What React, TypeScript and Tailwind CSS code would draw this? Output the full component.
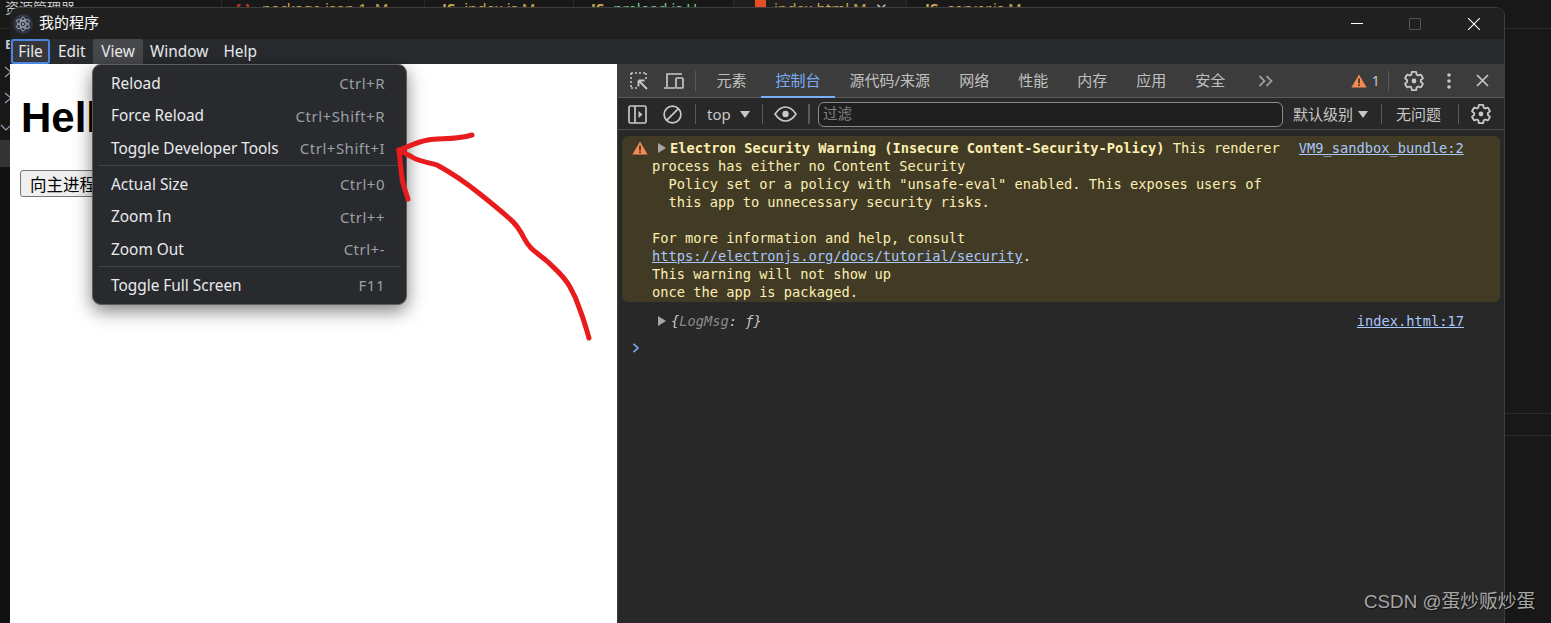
const sansFont = "font-['Noto_Sans','Noto_Sans_CJK_SC',sans-serif]"
const monoFont = "font-['DejaVu_Sans_Mono',monospace]"

const gearPath =
  'M19.43 12.98c.04-.32.07-.64.07-.98s-.03-.66-.07-.98l2.11-1.65c.19-.15.24-.42.12-.64l-2-3.46c-.12-.22-.39-.3-.61-.22l-2.49 1c-.52-.4-1.08-.73-1.69-.98l-.38-2.65C14.46 2.18 14.25 2 14 2h-4c-.25 0-.46.18-.49.42l-.38 2.65c-.61.25-1.17.59-1.69.98l-2.49-1c-.23-.09-.49 0-.61.22l-2 3.46c-.13.22-.07.49.12.64l2.11 1.65c-.04.32-.07.65-.07.98s.03.66.07.98l-2.11 1.65c-.19.15-.24.42-.12.64l2 3.46c.12.22.39.3.61.22l2.49-1c.52.4 1.08.73 1.69.98l.38 2.65c.03.24.24.42.49.42h4c.25 0 .46-.18.49-.42l.38-2.65c.61-.25 1.17-.59 1.69-.98l2.49 1c.23.09.49 0 .61-.22l2-3.46c.12-.22.07-.49-.12-.64l-2.11-1.65z'

function Gear() {
  return (
    <svg width="22" height="22" viewBox="0 0 24 24" fill="none" stroke="#c7c7c7" strokeWidth="2">
      <path d={gearPath} />
      <circle cx="12" cy="12" r="2.6" fill="#c7c7c7" stroke="none" />
    </svg>
  )
}

function WarnIcon() {
  return (
    <svg width="16" height="14" viewBox="0 0 16 14">
      <path d="M8 0.5 L15.6 13.5 H0.4 Z" fill="#f28b54" />
      <rect x="7.2" y="4.5" width="1.6" height="5" fill="#3a2a1c" />
      <rect x="7.2" y="10.4" width="1.6" height="1.6" fill="#3a2a1c" />
    </svg>
  )
}

function Caret({ className }: { className: string }) {
  return <span className={`w-0 h-0 border-y-[5px] border-y-transparent border-l-[8px] border-l-[#a6a6a6] ${className}`} />
}

function DownCaret() {
  return <span className="w-0 h-0 border-x-[5px] border-x-transparent border-t-[7px] border-t-[#c7c7c7]" />
}

function Sep({ className }: { className: string }) {
  return <span className={`w-px h-[20px] bg-[#5a5a5a] shrink-0 ${className}`} />
}

function Chevron({ down }: { down?: boolean }) {
  return (
    <svg width="12" height="12" viewBox="0 0 12 12" fill="none" stroke="#8fa3b8" strokeWidth="1.2">
      <path d={down ? 'M1 4 L6 9 L11 4' : 'M3 1 L9 6 L3 11'} />
    </svg>
  )
}

function ElectronLogo() {
  return (
    <div className="w-[20px] h-[20px] rounded-full bg-[#2f3542] flex items-center justify-center">
      <svg width="16" height="16" viewBox="0 0 16 16" fill="none" stroke="#a5adbb" strokeWidth="0.9">
        <ellipse cx="8" cy="8" rx="7" ry="2.8" transform="rotate(30 8 8)" />
        <ellipse cx="8" cy="8" rx="7" ry="2.8" transform="rotate(90 8 8)" />
        <ellipse cx="8" cy="8" rx="7" ry="2.8" transform="rotate(150 8 8)" />
        <circle cx="8" cy="8" r="1.1" fill="#a5adbb" stroke="none" />
      </svg>
    </div>
  )
}

const tabs = ['元素', '控制台', '源代码/来源', '网络', '性能', '内存', '应用', '安全']

type MenuRow = { label: string; keys: string } | 'sep'

const viewMenu: MenuRow[] = [
  { label: 'Reload', keys: 'Ctrl+R' },
  { label: 'Force Reload', keys: 'Ctrl+Shift+R' },
  { label: 'Toggle Developer Tools', keys: 'Ctrl+Shift+I' },
  'sep',
  { label: 'Actual Size', keys: 'Ctrl+0' },
  { label: 'Zoom In', keys: 'Ctrl++' },
  { label: 'Zoom Out', keys: 'Ctrl+-' },
  'sep',
  { label: 'Toggle Full Screen', keys: 'F11' },
]

function BackgroundEditor() {
  return (
    <div className={`absolute inset-0 bg-[#181818] ${sansFont}`}>
      <div className="flex h-[16px] overflow-hidden text-[15px] leading-[16px] text-[#c9a74e]">
        <div className="w-[221px] pl-[5px] text-[14px] text-[#c8c8c8] flex justify-between pr-[20px]">
          <span>资源管理器</span>
          <span>···</span>
        </div>
        <div className="w-[203px] border-l border-[#2b2b2b] flex gap-[7px] pl-[13px]">
          <span className="w-[20px] text-[#c0392b] font-bold tracking-[4px]">{'{}'}</span>
          <span>package.json 1, M</span>
        </div>
        <div className="w-[149px] border-l border-[#2b2b2b] flex gap-[9px] pl-[17px]">
          <b>JS</b>
          <span>index.js M</span>
        </div>
        <div className="w-[160px] border-l border-[#2b2b2b] flex gap-[9px] pl-[17px]">
          <b>JS</b>
          <span className="text-[#73c991]">preload.js U</span>
        </div>
        <div className="w-[173px] bg-[#1f1f1f] border-l border-[#2b2b2b] flex gap-[8px] pl-[21px]">
          <span className="w-[11px] h-[14px] bg-[#e44d26]" />
          <span>index.html M</span>
          <span className="text-[#c8c8c8]">✕</span>
        </div>
        <div className="flex-1 border-l border-[#2b2b2b] flex gap-[9px] pl-[18px]">
          <b>JS</b>
          <span>server.js M</span>
        </div>
      </div>
      <div className="h-px mt-[12px] bg-[#2b2b2b]" />
      <div className="h-px mt-[384px] bg-[#2b2b2b]" />
      <div className="h-px mt-[21px] bg-[#2b2b2b]" />
      <div className="absolute left-0 top-[37px] w-[10px] overflow-hidden flex flex-col text-[#c8c8c8] text-[13px] font-bold leading-[14px]">
        <span className="pl-[5px]">E</span>
        <span className="mt-[15px] pl-[2px]"><Chevron /></span>
        <span className="mt-[14px] pl-[2px]"><Chevron /></span>
        <span className="mt-[17px]"><Chevron down /></span>
      </div>
      <div className="absolute left-0 top-[140px] w-[10px] h-[27px] bg-[#333333]" />
      <div className="absolute left-0 top-[167px] w-[10px] bottom-0 bg-[#111111]" />
    </div>
  )
}

function ViewDropdown() {
  return (
    <div className="absolute left-[82px] top-[56px] w-[315px] h-[241px] bg-[#292a2d] border border-[#5c5d61] rounded-[9px] shadow-[0_6px_18px_rgba(0,0,0,0.5)] pt-[2px] px-[5px] text-[15.4px]">
      {viewMenu.map((row, i) =>
        row === 'sep' ? (
          <div key={i} className="h-[3.5px] border-t border-[#414246]" />
        ) : (
          <div key={i} className="h-[32.5px] flex items-center justify-between pl-[13px] pr-[16px]">
            <span className="text-[#e8eaed]">{row.label}</span>
            <span className="text-[#9aa0a6] text-[15px] tracking-[0.5px]">{row.keys}</span>
          </div>
        )
      )}
    </div>
  )
}

function PagePane() {
  return (
    <div className="w-[607px] shrink-0 bg-white pl-[10px] pt-[30px] font-['Liberation_Sans','Noto_Sans_CJK_SC',sans-serif] text-black">
      <h1 className="ml-px text-[42px] leading-[48px] font-bold whitespace-nowrap">Hello World!</h1>
      <button className="mt-[28px] h-[27px] px-[9px] bg-[#efefef] border border-[#767676] rounded-[3px] text-[16.5px] leading-[22px] whitespace-nowrap font-['Noto_Sans_CJK_SC',sans-serif]">
        向主进程发送消息
      </button>
    </div>
  )
}

function DevtoolsTabs() {
  return (
    <div className="h-[34px] shrink-0 bg-[#3c3c3c] border-b border-[#5a5a5a] flex items-center text-[15px] text-[#c0c0c0]">
      <svg className="ml-[11px]" width="20" height="20" viewBox="0 0 20 20" fill="none" stroke="#c7c7c7" strokeWidth="1.6">
        <path d="M2 2h15M2 2v15M17 2v7M2 17h7" strokeDasharray="2 2" />
        <path d="M9.5 9.5 L18 18 M9.5 9.5 h6 M9.5 9.5 v6" strokeWidth="1.8" />
      </svg>
      <svg className="ml-[14px]" width="22" height="20" viewBox="0 0 22 20" fill="none" stroke="#c7c7c7" strokeWidth="1.7">
        <path d="M19 3H4v13M1 17h11" />
        <rect x="13" y="7" width="7" height="10" rx="1" />
      </svg>
      <Sep className="ml-[10px]" />
      <div className="flex h-full ml-[6px]">
        {tabs.map((t) => (
          <div
            key={t}
            className={
              t === '控制台'
                ? 'px-[14.5px] h-[34px] flex items-center text-[#7cacf8] border-b-2 border-[#7cacf8]'
                : 'px-[14.5px] h-full flex items-center'
            }
          >
            {t}
          </div>
        ))}
      </div>
      <svg className="ml-[18px]" width="16" height="12" viewBox="0 0 16 12" fill="none" stroke="#9a9a9a" strokeWidth="1.8">
        <path d="M1.5 1 L6.5 6 L1.5 11 M8.5 1 L13.5 6 L8.5 11" />
      </svg>
      <span className="ml-[77px] flex items-center gap-[5px]">
        <WarnIcon />
        <span className="text-[#c7c7c7] text-[14px]">1</span>
      </span>
      <Sep className="ml-[8px]" />
      <span className="ml-[14px] flex">
        <Gear />
      </span>
      <svg className="ml-[22px]" width="4" height="16" viewBox="0 0 4 16" fill="#c7c7c7">
        <circle cx="2" cy="2" r="1.8" />
        <circle cx="2" cy="8" r="1.8" />
        <circle cx="2" cy="14" r="1.8" />
      </svg>
      <svg className="ml-[25px]" width="13" height="13" viewBox="0 0 13 13" stroke="#c7c7c7" strokeWidth="1.7">
        <path d="M1 1 L12 12 M12 1 L1 12" />
      </svg>
    </div>
  )
}

function ConsoleToolbar() {
  return (
    <div className="h-[32px] shrink-0 pt-px border-b border-[#4a4a4a] flex items-center text-[15px] text-[#c7c7c7]">
      <svg className="ml-[10px]" width="19" height="19" viewBox="0 0 19 19" fill="none" stroke="#c7c7c7" strokeWidth="1.7">
        <rect x="1" y="1" width="17" height="17" rx="1.5" />
        <path d="M7 1v17" />
        <path d="M10.5 6 L14.5 9.5 L10.5 13 Z" fill="#c7c7c7" stroke="none" />
      </svg>
      <svg className="ml-[16px]" width="19" height="19" viewBox="0 0 19 19" fill="none" stroke="#c7c7c7" strokeWidth="1.7">
        <circle cx="9.5" cy="9.5" r="8.4" />
        <path d="M3.6 15.4 L15.4 3.6" />
      </svg>
      <Sep className="ml-[13px]" />
      <span className="ml-[11px] w-[33px]">top</span>
      <DownCaret />
      <Sep className="ml-[12px]" />
      <svg className="ml-[11px]" width="23" height="16" viewBox="0 0 23 16" fill="none" stroke="#c7c7c7" strokeWidth="1.7">
        <path d="M1 8 C5 2 8.5 1 11.5 1 S18 2 22 8 C18 14 14.5 15 11.5 15 S5 14 1 8 Z" />
        <circle cx="11.5" cy="8" r="3.2" fill="#c7c7c7" stroke="none" />
      </svg>
      <span className="ml-[11px] w-[2px] h-[20px] bg-[#5a5a5a]" />
      <div className="ml-[8px] w-[465px] h-[25px] border border-[#8a8a8a] rounded-[6px] bg-[#1f1f1f] pl-[4px] flex items-center text-[#808080] text-[14.5px]">
        过滤
      </div>
      <span className="ml-[10px]">默认级别</span>
      <span className="ml-[5px] flex">
        <DownCaret />
      </span>
      <Sep className="ml-[13px]" />
      <span className="ml-[14px]">无问题</span>
      <Sep className="ml-[17px]" />
      <span className="ml-[11px] flex">
        <Gear />
      </span>
    </div>
  )
}

function ConsoleBody() {
  const link = 'text-[#a8c7fa] underline'
  return (
    <div className={`flex-1 pt-[6px] text-[13.7px] leading-[18px] ${monoFont}`}>
      <div className="mx-[4px] w-[878px] h-[166px] rounded-[6px] bg-[#413b26] flex text-[#fdeeb1]">
        <div className="w-[30px] shrink-0 pl-[10px] pt-[5px]">
          <WarnIcon />
        </div>
        <div className="flex-1 whitespace-pre">
          <div className="flex items-center h-[18px] mt-[3px]">
            <Caret className="ml-[6px] mr-[4px]" />
            <span>
              <b>Electron Security Warning (Insecure Content-Security-Policy)</b> This renderer
            </span>
            <span className={`ml-[19px] ${link}`}>VM9_sandbox_bundle:2</span>
          </div>
          <div>process has either no Content Security</div>
          <div>{'  Policy set or a policy with "unsafe-eval" enabled. This exposes users of'}</div>
          <div>{'  this app to unnecessary security risks.'}</div>
          <div>{' '}</div>
          <div>For more information and help, consult</div>
          <div>
            <span className={link}>https://electronjs.org/docs/tutorial/security</span>.
          </div>
          <div>This warning will not show up</div>
          <div>once the app is packaged.</div>
        </div>
      </div>
      <div className="flex items-center justify-between h-[18px] mt-[10px] pl-[40px] w-[846px] text-[#c7c7c7]">
        <span className="flex items-center">
          <Caret className="mr-[5px]" />
          <i>
            {'{'}
            <span className="text-[#8a8a8a]">LogMsg</span>: ƒ{'}'}
          </i>
        </span>
        <span className={link}>index.html:17</span>
      </div>
      <svg className="ml-[14px] mt-[13px]" width="8" height="10" viewBox="0 0 8 10" fill="none" stroke="#7cacf8" strokeWidth="1.6">
        <path d="M1.5 0.8 L6 5 L1.5 9.2" />
      </svg>
    </div>
  )
}

function ElectronWindow() {
  return (
    <div className={`absolute left-[10px] top-[7px] w-[1495px] h-[616px] flex flex-col rounded-t-[9px] overflow-hidden border-r border-t border-[#3e3e3e] ${sansFont}`}>
      <div className="h-[31px] shrink-0 bg-[#202020] flex items-center pl-[3px] text-white">
        <ElectronLogo />
        <span className="ml-[6px] text-[15px] pb-[2px]">我的程序</span>
        <div className="ml-auto flex items-center">
          <span className="w-[12px] h-px bg-white" />
          <span className="ml-[46px] w-[12px] h-[12px] border border-[#555555] rounded-[1px]" />
          <svg className="ml-[47px] mr-[24px]" width="12" height="12" viewBox="0 0 12 12" stroke="#ffffff" strokeWidth="1.1">
            <path d="M0 0 L12 12 M12 0 L0 12" />
          </svg>
        </div>
      </div>
      <div className="h-[25px] shrink-0 bg-[#292a2d] flex text-[15.4px] text-[#e8eaed]">
        <span className="ml-px w-[39px] bg-[#36373a] border-2 border-[#4a85e0] rounded-[3px] flex items-center justify-center pt-px">File</span>
        <span className="ml-[8px] w-[29px] flex items-center pt-px">Edit</span>
        <span className="ml-[6px] w-[50px] bg-[#47484b] rounded-t-[3px] flex items-center justify-center pt-px">View</span>
        <span className="ml-[7px] flex items-center pt-px">Window</span>
        <span className="ml-[15px] flex items-center pt-px">Help</span>
      </div>
      <div className="flex-1 flex min-h-0">
        <PagePane />
        <div className="flex-1 min-w-0 flex flex-col bg-[#282828] border-l border-[#3e3e3e]">
          <DevtoolsTabs />
          <ConsoleToolbar />
          <ConsoleBody />
        </div>
      </div>
      <ViewDropdown />
    </div>
  )
}

export default function App() {
  return (
    <div className="relative w-[1551px] h-[623px] overflow-hidden bg-[#181818]">
      <BackgroundEditor />
      <ElectronWindow />
      <svg className="absolute inset-0 pointer-events-none" width="1551" height="623" fill="none" stroke="#e81c1c" strokeWidth="5" strokeLinecap="round" strokeLinejoin="round">
        <path d="M589 338 C586 328 584 320 580 310 C577 300 574 294 570 287 C564 276 556 270 548 262 C538 253 530 250 524 238 C519 228 516 224 510 219 C500 210 490 202 480 194 C465 182 450 172 437 165 C428 162 420 162 412 157 L399 150" />
        <path d="M472 135 C455 140 440 138 428 140 C416 142 408 147 399 150" />
        <path d="M399 150 C400 160 401 170 402 178 C403 186 406 192 408 199" />
      </svg>
      <div className="absolute left-[1364px] top-[588px] text-[18.8px] leading-[28px] text-[#a6a6a6] [text-shadow:1px_1px_1px_rgba(0,0,0,0.6)] font-['Liberation_Sans','Noto_Sans_CJK_SC',sans-serif] whitespace-nowrap">
        CSDN @蛋炒贩炒蛋
      </div>
    </div>
  )
}
